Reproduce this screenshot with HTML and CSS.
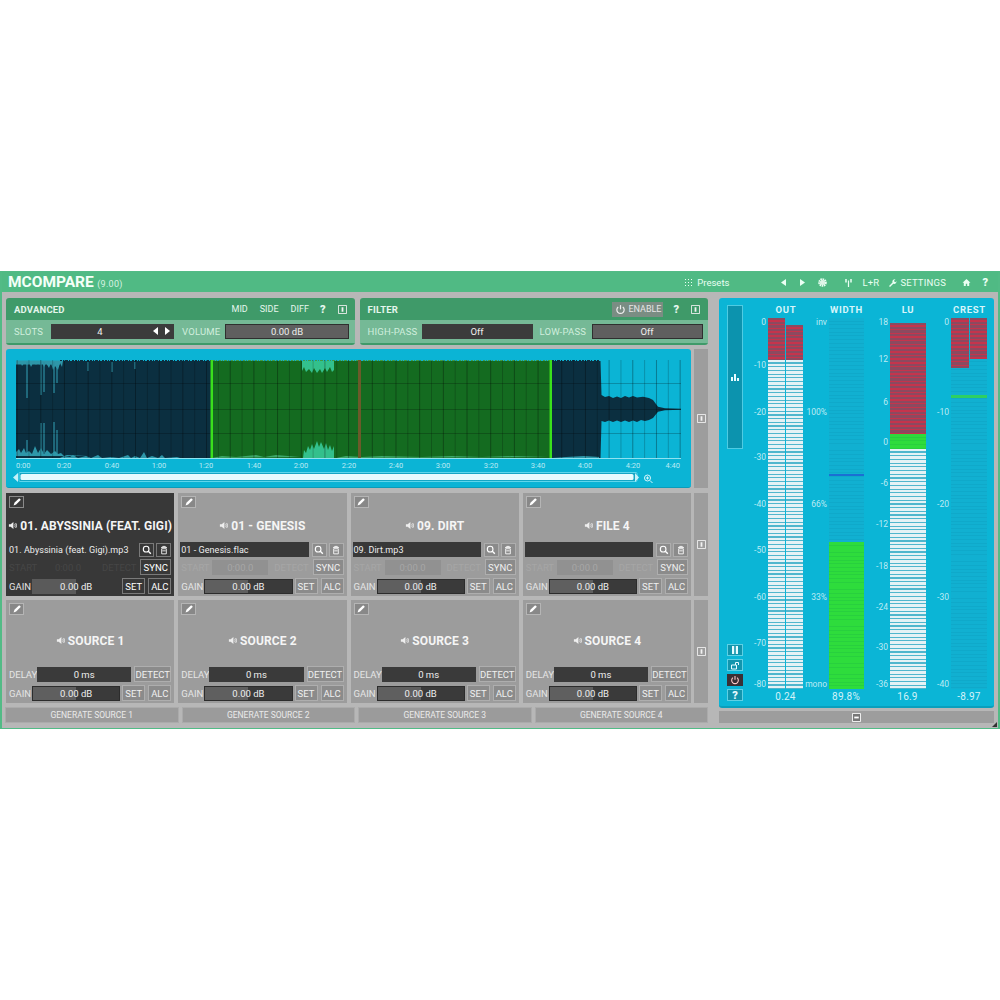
FILE: index.html
```html
<!DOCTYPE html>
<html lang="en">
<head>
<meta charset="utf-8">
<title>MCompare</title>
<link rel="stylesheet" href="styles.css">
</head>
<body>
<svg class="defs" width="0" height="0" aria-hidden="true">
  <symbol id="i-pencil" viewBox="0 0 14 14"><path d="M3 11l1-3 5.5-5.5 2 2L6 10z" fill="#fff"/></symbol>
  <symbol id="i-speaker" viewBox="0 0 10 10"><path d="M1 3.5h2L6 1v8L3 6.5H1z" fill="currentColor"/><path d="M7.2 3.2c1 1 1 2.600 0 3.600M8.400 2.200c1.500 1.600 1.500 4 0 5.600" fill="none" stroke="currentColor"/></symbol>
  <symbol id="i-search" viewBox="0 0 14 14"><circle cx="6" cy="6" r="3.300" fill="none" stroke="#fff" stroke-width="1.300"/><path d="M8.500 8.500l3 3" stroke="#fff" stroke-width="1.600"/></symbol>
  <symbol id="i-trash" viewBox="0 0 14 14"><path d="M3.500 4h7M5.500 4V2.800h3V4" fill="none" stroke="#fff"/><path d="M4.300 5.500h5.400V11.500H4.300z" fill="none" stroke="#fff"/><path d="M5 8h4" stroke="#fff"/></symbol>
  <symbol id="i-tab" viewBox="0 0 10 10"><path d="M.5.500h9v9h-9z" fill="none" stroke="#f2f2f2"/><path d="M4 2.500h2v5H4z" fill="#f2f2f2"/></symbol>
  <symbol id="i-tabh" viewBox="0 0 10 10"><path d="M.5.500h9v9h-9z" fill="#777" stroke="#fff"/><path d="M2.500 5h5" stroke="#fff" stroke-width="2"/></symbol>
  <symbol id="i-power" viewBox="0 0 12 12"><path d="M3.500 3.200a4 4 0 1 0 5 0" fill="none" stroke="currentColor" stroke-width="1.300"/><path d="M6 1.200v4.600" stroke="currentColor" stroke-width="1.300"/></symbol>
</svg>

<div class="plugin">
  <header class="titlebar">
    <div class="brand"><span class="brand-name">MCOMPARE</span> <span class="brand-ver">(9.00)</span></div>
    <div class="bar-tools">
      <span class="tool presets"><svg class="ic9" viewBox="0 0 9 9"><path d="M1 1h1v1H1zM4 1h1v1H4zM7 1h1v1H7zM1 4h1v1H1zM4 4h1v1H4zM7 4h1v1H7zM1 7h1v1H1zM4 7h1v1H4zM7 7h1v1H7z" fill="#eafff3"/></svg>Presets</span>
      <span class="tool prev"><svg class="ic9" viewBox="0 0 9 9"><path d="M7 1v7L2 4.500z" fill="#eafff3"/></svg></span>
      <span class="tool next"><svg class="ic9" viewBox="0 0 9 9"><path d="M2 1v7l5-3.500z" fill="#eafff3"/></svg></span>
      <span class="tool gear"><svg class="ic9" viewBox="0 0 9 9"><circle cx="4.500" cy="4.500" r="3.200" fill="none" stroke="#eafff3" stroke-width="2.200" stroke-dasharray="1.500 .6"/><circle cx="4.500" cy="4.500" r="2.500" fill="#dff5e8"/></svg></span>
      <span class="tool antenna"><svg class="ic9" viewBox="0 0 9 9"><path d="M4.500 2.500V9" stroke="#eafff3" stroke-width="1.200"/><path d="M2 1v3.500M7 1v3.500" stroke="#eafff3" stroke-width="1.500"/></svg></span>
      <span class="tool lr">L+R</span>
      <span class="tool settings"><svg class="ic9" viewBox="0 0 9 9"><path d="M1 8l3.500-3.500c-.6-1.500.6-3.500 3-3.200L6 2.800l.5 1 1 .4L8.500 3c.2 2.300-1.700 3.400-3.200 2.800L2 9z" fill="#eafff3"/></svg>SETTINGS</span>
      <span class="tool home"><svg class="ic9" viewBox="0 0 9 9"><path d="M4.500 1L.5 4.800h1.300V8h2V5.800h1.400V8h2V4.800h1.300z" fill="#eafff3"/></svg></span>
      <span class="tool help">?</span>
    </div>
  </header>

  <main class="workspace">
    <div class="left">
      <div class="panels">
        <section class="panel">
          <div class="panel-head">
            <span class="panel-title">ADVANCED</span>
            <span class="ph-btn mid">MID</span><span class="ph-btn">SIDE</span><span class="ph-btn">DIFF</span>
            <span class="ph-q">?</span><svg class="tabic"><use href="#i-tab"/></svg>
          </div>
          <div class="panel-row">
            <span class="plabel l-slots">SLOTS</span>
            <div class="field f-slots"><span class="f-center">4</span><span class="arrows">
              <svg class="arr" viewBox="0 0 7 8"><path d="M6 0v8L1 4z" fill="#fff"/></svg>
              <svg class="arr" viewBox="0 0 7 8"><path d="M1 0v8l5-4z" fill="#fff"/></svg></span></div>
            <span class="plabel l-volume">VOLUME</span>
            <div class="field lit f-volume">0.00 dB</div>
          </div>
        </section>
        <section class="panel">
          <div class="panel-head">
            <span class="panel-title">FILTER</span>
            <span class="enable"><svg class="pw"><use href="#i-power"/></svg>ENABLE</span>
            <span class="ph-q">?</span><svg class="tabic"><use href="#i-tab"/></svg>
          </div>
          <div class="panel-row">
            <span class="plabel l-hp">HIGH-PASS</span>
            <div class="field f-pass">Off</div>
            <span class="plabel l-lp">LOW-PASS</span>
            <div class="field lit f-pass">Off</div>
          </div>
        </section>
      </div>

      <div class="lane wave-lane">
        <section class="wave">
          <svg class="wave-svg" viewBox="6 349 685 139" preserveAspectRatio="none">
            <defs>
              <pattern id="gridV" x="16.6" y="0" width="23.68" height="200" patternUnits="userSpaceOnUse">
                <rect x="0" y="0" width="1" height="200" fill="#000" fill-opacity=".32"/>
                <rect x="11.840" y="0" width="1" height="200" fill="#000" fill-opacity=".2"/>
              </pattern>
            </defs>
            <!-- dark body -->
            <path class="w-dark" d="M16 361H600V458H16z"/>
            <path class="w-green" d="M212 361H550V458H212z"/>
            <!-- fringes -->
            <line class="fr-dark" x1="60" y1="360.500" x2="212" y2="360.500"/>
            <line class="fr-dark" x1="552" y1="360.500" x2="600" y2="360.500"/>
            <line class="fr-green" x1="212" y1="360.500" x2="550" y2="360.500"/>
            <line class="fr-top" x1="16" y1="362.500" x2="60" y2="362.500"/>
            <path class="w-teal" d="M16 361l2 3 2-3 2 5 3-4 2 3 2-3 2 5 3-6 2 4 2-4 2 4 2-3 2 5 2-4 3 5 2-5 2 7 2-4 3 4 2-7 2 4 1-6z"/>
            <path class="spike" d="M27 362v36M41 362v33M44 362v30M54 362v31M57 365v18M88 362v9M112 362v10M135 362v7M41 423v33M44 423v30M54 422v34M57 430v26M27 440v16"/>
            <path class="w-teal" d="M16 458v-6l3-3 2 4 3-5 2 5 3-2 3 3 3-8 3 7 3-5 3 6 3-4 4 4 4-3 3 3 3-1 3 3 3-1 20 1H16zM60 458l4-2 6 1 3-2 5 3 8-2 5 2 7-3 4 3 9-1 8 1 9-3 3 3 4-2 5 2 4-6 3 6 5-2 6 2 4-3 3 3 12-1 3 1z"/>
            <path class="w-aqua" d="M302 361h32v9l-2 2-2-5-3 5-2-4-3 5-2-4-3 4-3-5-2 5-3-4-3 3-2-5-2 4z"/>
            <path class="w-aqua" d="M303 458l1-8 2 3 2-7 2 4 2-6 2 5 3-8 2 6 2-5 3 7 2-6 2 7 2-5 2 6 2-5v12z"/>
            <path class="w-greenlight" d="M212 458l10-2 14 1 20-2 8 2 12-2 24 2zM336 458l10-2 16 1 20-1 40 1 30-1 30 1 30-1 36 1z"/>
            <path class="w-teal" d="M552 458l14-1 18-1 16 1v1z"/>
            <!-- tail -->
            <path class="w-dark" d="M599 361H600.500L601.500 395 605 397 609 396 613 398 617 396.500 621 398 625 396 629 397.500 633 396 637 397.500 643 396.700 649 398 653 400 658 406.700 665 408.300 681 408.800V409.800L665 410.300 658 411.700 653 418 649 420 645 421 641 420 637 422 633 420.500 629 422 625 420.500 621 422 617 420.500 613 422 609 420.500 605 422 601.500 421 600.500 458H599z"/>
            <!-- grid -->
            <rect x="16.500" y="360" width="664.500" height="98" fill="url(#gridV)"/>
            <path class="w-hgrid" d="M16 383.500H681M16 409.500H681M16 433.500H681"/>
            <!-- selection markers -->
            <rect class="w-brown" x="358" y="360" width="3" height="98"/>
            <rect class="w-marker" x="210.500" y="360" width="2.500" height="98"/>
            <rect class="w-marker" x="549.500" y="360" width="2.500" height="98"/>
            <line class="w-axis" x1="16" y1="458.500" x2="681" y2="458.500"/>
            <!-- time scale -->
            <g class="w-time">
              <text x="16" y="468" class="start">0:00</text><text x="64" y="468">0:20</text><text x="112" y="468">0:40</text><text x="159" y="468">1:00</text><text x="206" y="468">1:20</text><text x="254" y="468">1:40</text><text x="301" y="468">2:00</text><text x="349" y="468">2:20</text><text x="396" y="468">2:40</text><text x="443" y="468">3:00</text><text x="491" y="468">3:20</text><text x="538" y="468">3:40</text><text x="585" y="468">4:00</text><text x="633" y="468">4:20</text><text x="680" y="468" class="end">4:40</text>
            </g>
            <!-- scrollbar -->
            <rect class="sc-track" x="19" y="472.500" width="618" height="9" rx="1"/>
            <rect class="sc-thumb" x="20.500" y="474" width="613" height="6" rx="1.500"/>
            <path class="sc-arrow" d="M18 473v9l-5-4.500zM635 473v9l4-4.500z"/>
            <circle class="sc-zoom" cx="647.500" cy="478" r="3"/>
            <path class="sc-zoom" d="M650 480.500l2.500 2.500M646 478h3M647.500 476.500v3"/>
          </svg>
        </section>
        <aside class="strip"><svg class="tabic"><use href="#i-tab"/></svg></aside>
      </div>

      <div class="lane">
        <div class="cards">
          <article class="card active">
            <span class="edit"><svg><use href="#i-pencil"/></svg></span>
            <h2 class="card-title"><svg class="spk"><use href="#i-speaker"/></svg>01. ABYSSINIA (FEAT. GIGI)</h2>
            <div class="row file"><div class="fname">01. Abyssinia (feat. Gigi).mp3</div><span class="btn sq"><svg><use href="#i-search"/></svg></span><span class="btn sq"><svg><use href="#i-trash"/></svg></span></div>
            <div class="row sync"><span class="faded lab">START</span><span class="faded box">0:00.0</span><span class="faded det">DETECT</span><span class="btn b-sync">SYNC</span></div>
            <div class="row"><span class="lab">GAIN</span><div class="slider bare">0.00 dB</div><span class="btn b-set">SET</span><span class="btn b-alc">ALC</span></div>
          </article>
          <article class="card">
            <span class="edit"><svg><use href="#i-pencil"/></svg></span>
            <h2 class="card-title"><svg class="spk"><use href="#i-speaker"/></svg>01 - GENESIS</h2>
            <div class="row file"><div class="fname">01 - Genesis.flac</div><span class="btn sq"><svg><use href="#i-search"/></svg></span><span class="btn sq"><svg><use href="#i-trash"/></svg></span></div>
            <div class="row sync"><span class="faded lab">START</span><span class="faded box">0:00.0</span><span class="faded det">DETECT</span><span class="btn b-sync">SYNC</span></div>
            <div class="row"><span class="lab">GAIN</span><div class="slider">0.00 dB</div><span class="btn b-set">SET</span><span class="btn b-alc">ALC</span></div>
          </article>
          <article class="card">
            <span class="edit"><svg><use href="#i-pencil"/></svg></span>
            <h2 class="card-title"><svg class="spk"><use href="#i-speaker"/></svg>09. DIRT</h2>
            <div class="row file"><div class="fname">09. Dirt.mp3</div><span class="btn sq"><svg><use href="#i-search"/></svg></span><span class="btn sq"><svg><use href="#i-trash"/></svg></span></div>
            <div class="row sync"><span class="faded lab">START</span><span class="faded box">0:00.0</span><span class="faded det">DETECT</span><span class="btn b-sync">SYNC</span></div>
            <div class="row"><span class="lab">GAIN</span><div class="slider">0.00 dB</div><span class="btn b-set">SET</span><span class="btn b-alc">ALC</span></div>
          </article>
          <article class="card">
            <span class="edit"><svg><use href="#i-pencil"/></svg></span>
            <h2 class="card-title"><svg class="spk"><use href="#i-speaker"/></svg>FILE 4</h2>
            <div class="row file"><div class="fname"></div><span class="btn sq"><svg><use href="#i-search"/></svg></span><span class="btn sq"><svg><use href="#i-trash"/></svg></span></div>
            <div class="row sync"><span class="faded lab">START</span><span class="faded box">0:00.0</span><span class="faded det">DETECT</span><span class="btn b-sync">SYNC</span></div>
            <div class="row"><span class="lab">GAIN</span><div class="slider">0.00 dB</div><span class="btn b-set">SET</span><span class="btn b-alc">ALC</span></div>
          </article>
        </div>
        <aside class="strip"><svg class="tabic"><use href="#i-tab"/></svg></aside>
      </div>

      <div class="lane">
        <div class="cards">
          <article class="card source">
            <span class="edit"><svg><use href="#i-pencil"/></svg></span>
            <h2 class="card-title"><svg class="spk"><use href="#i-speaker"/></svg>SOURCE 1</h2>
            <div class="row delay"><span class="lab">DELAY</span><div class="dfield">0 ms</div><span class="btn b-det">DETECT</span></div>
            <div class="row"><span class="lab">GAIN</span><div class="slider">0.00 dB</div><span class="btn b-set">SET</span><span class="btn b-alc">ALC</span></div>
          </article>
          <article class="card source">
            <span class="edit"><svg><use href="#i-pencil"/></svg></span>
            <h2 class="card-title"><svg class="spk"><use href="#i-speaker"/></svg>SOURCE 2</h2>
            <div class="row delay"><span class="lab">DELAY</span><div class="dfield">0 ms</div><span class="btn b-det">DETECT</span></div>
            <div class="row"><span class="lab">GAIN</span><div class="slider">0.00 dB</div><span class="btn b-set">SET</span><span class="btn b-alc">ALC</span></div>
          </article>
          <article class="card source">
            <span class="edit"><svg><use href="#i-pencil"/></svg></span>
            <h2 class="card-title"><svg class="spk"><use href="#i-speaker"/></svg>SOURCE 3</h2>
            <div class="row delay"><span class="lab">DELAY</span><div class="dfield">0 ms</div><span class="btn b-det">DETECT</span></div>
            <div class="row"><span class="lab">GAIN</span><div class="slider">0.00 dB</div><span class="btn b-set">SET</span><span class="btn b-alc">ALC</span></div>
          </article>
          <article class="card source">
            <span class="edit"><svg><use href="#i-pencil"/></svg></span>
            <h2 class="card-title"><svg class="spk"><use href="#i-speaker"/></svg>SOURCE 4</h2>
            <div class="row delay"><span class="lab">DELAY</span><div class="dfield">0 ms</div><span class="btn b-det">DETECT</span></div>
            <div class="row"><span class="lab">GAIN</span><div class="slider">0.00 dB</div><span class="btn b-set">SET</span><span class="btn b-alc">ALC</span></div>
          </article>
        </div>
        <aside class="strip"><svg class="tabic"><use href="#i-tab"/></svg></aside>
      </div>

      <div class="generate">
        <span class="gen">GENERATE SOURCE 1</span>
        <span class="gen">GENERATE SOURCE 2</span>
        <span class="gen">GENERATE SOURCE 3</span>
        <span class="gen">GENERATE SOURCE 4</span>
      </div>
    </div>

    <div class="right">
      <section class="meters">
        <div class="tools">
          <div class="mode"><svg class="bars-ic" viewBox="0 0 10 10"><path d="M1 5h2v4H1zM4 2h2v7H4zM7 6h2v3H7z" fill="#e8fbff"/></svg></div>
          <div class="tool-btns">
            <span class="tb"><svg viewBox="0 0 10 10"><path d="M2 1h2.200v8H2zM5.800 1H8v8H5.800z" fill="#e8fbff"/></svg></span>
            <span class="tb"><svg viewBox="0 0 10 10"><path d="M1.500 5h5v4h-5z" fill="none" stroke="#e8fbff"/><path d="M5.500 5V2.500h3V5" fill="none" stroke="#e8fbff"/></svg></span>
            <span class="tb on"><svg class="pw-on"><use href="#i-power"/></svg></span>
            <span class="tb q">?</span>
          </div>
        </div>

        <div class="meter m-out">
          <div class="m-title">OUT</div>
          <div class="m-body">
            <div class="scale">
              <span style="top:3px">0</span><span style="top:46px">-10</span><span style="top:93px">-20</span><span style="top:138px">-30</span><span style="top:185px">-40</span><span style="top:231px">-50</span><span style="top:278px">-60</span><span style="top:324px">-70</span><span style="top:365px">-80</span>
            </div>
            <div class="bar dual">
              <div class="chan"><div class="seg red" style="height:42px"></div><div class="seg white"></div></div>
              <div class="chan"><div class="seg gap" style="height:7px"></div><div class="seg red" style="height:35px"></div><div class="seg white"></div></div>
            </div>
          </div>
          <div class="m-value">0.24</div>
        </div>

        <div class="meter m-width">
          <div class="m-title">WIDTH</div>
          <div class="m-body">
            <div class="scale">
              <span style="top:3px">inv</span><span style="top:93px">100%</span><span style="top:185px">66%</span><span style="top:278px">33%</span><span style="top:365px">mono</span>
            </div>
            <div class="bar single">
              <div class="seg gap" style="height:224px"></div><div class="seg green"></div>
              <div class="level blue" style="top:156px"></div>
            </div>
          </div>
          <div class="m-value">89.8%</div>
        </div>

        <div class="meter m-lu">
          <div class="m-title">LU</div>
          <div class="m-body">
            <div class="scale">
              <span style="top:3px">18</span><span style="top:40px">12</span><span style="top:83px">6</span><span style="top:123px">0</span><span style="top:164px">-6</span><span style="top:205px">-12</span><span style="top:247px">-18</span><span style="top:288px">-24</span><span style="top:328px">-30</span><span style="top:365px">-36</span>
            </div>
            <div class="bar flat">
              <div class="seg gap" style="height:5px"></div><div class="seg red" style="height:111px"></div><div class="seg green" style="height:15px"></div><div class="seg white"></div>
            </div>
          </div>
          <div class="m-value">16.9</div>
        </div>

        <div class="meter m-crest">
          <div class="m-title">CREST</div>
          <div class="m-body">
            <div class="scale">
              <span style="top:3px">0</span><span style="top:93px">-10</span><span style="top:185px">-20</span><span style="top:278px">-30</span><span style="top:365px">-40</span>
            </div>
            <div class="bar dual tinted">
              <div class="chan"><div class="seg red" style="height:50px"></div></div>
              <div class="chan"><div class="seg red" style="height:41px"></div></div>
              <div class="level lime" style="top:77px"></div>
            </div>
          </div>
          <div class="m-value">-8.97</div>
        </div>
      </section>
      <div class="bottom-strip"><svg class="tabic"><use href="#i-tabh"/></svg></div>
    </div>
  </main>
  <svg class="grip" viewBox="0 0 5 5"><path d="M5 0v5H0z" fill="#333"/></svg>
</div>
</body>
</html>
```

FILE: styles.css
```css
* { box-sizing: border-box; }
html, body { margin: 0; padding: 0; background: #fff; }
body { font-family: Roboto, "Liberation Sans", sans-serif; color: #f2f2f2; font-size: 9.5px; }
.defs { position: absolute; }

.plugin {
  position: relative;
  margin-top: 271px;
  height: 458px;
  background: #b7b7b7;
  border: solid #52bb86;
  border-width: 1px 2px 1px 2px;
  overflow: hidden;
}

/* title bar */
.titlebar {
  height: 20px;
  background: #50ba84;
  display: flex;
  align-items: center;
  justify-content: space-between;
  color: #eafff3;
}
.brand { padding-left: 6px; white-space: nowrap; }
.brand-name { font-size: 15.500px; font-weight: 700; color: #f4fff8; }
.brand-ver { font-size: 9px; margin-left: 1px; color: #d8f2e3; letter-spacing: .3px; }
.bar-tools { display: flex; align-items: center; font-size: 9.5px; height: 100%; padding-right: 8px; }
.tool { display: flex; align-items: center; letter-spacing: .2px; }
.ic9 { width: 9px; height: 9px; display: block; }
.presets { gap: 4px; letter-spacing: 0; }
.prev { margin-left: 50px; }
.next { margin-left: 10px; }
.gear { margin-left: 11px; }
.antenna { margin-left: 17px; }
.lr { margin-left: 9px; }
.settings { margin-left: 9px; gap: 3px; }
.home { margin-left: 16px; }
.help { margin-left: 10px; font-size: 11px; font-weight: 900; width: 9px; justify-content: center; }

/* layout */
.workspace { display: flex; gap: 11px; padding: 6px 0 0 4px; }
.left { width: 702px; display: flex; flex-direction: column; gap: 4px; }
.right { width: 275px; display: flex; flex-direction: column; gap: 3px; }
.panels { display: flex; gap: 5px; height: 47px; }
.lane { display: flex; gap: 3px; }
.wave-lane { margin-bottom: 1px; }
.strip {
  width: 14px;
  background: #9d9d9d;
  display: flex;
  align-items: center;
  justify-content: center;
}
.tabic { width: 9px; height: 9px; display: block; flex: none; }

/* top panels */
.panel {
  flex: 1;
  background: #3f9a69;
  border-radius: 3px;
  padding-bottom: 2px;
  display: flex;
  flex-direction: column;
}
.panel-head {
  height: 22px;
  display: flex;
  align-items: center;
  padding: 0 8px;
  color: #e6f7ee;
}
.panel-title { font-weight: 700; font-size: 9.500px; letter-spacing: .2px; color: #e4f6ec; margin-right: auto; }
.ph-btn { font-size: 9px; margin-left: 12px; }
.ph-q { font-weight: 900; font-size: 11px; margin-left: 11px; margin-right: 12px; }
.enable {
  display: flex;
  align-items: center;
  gap: 2px;
  background: #7a8d83;
  width: 51px;
  height: 15px;
  padding: 0 0 0 3px;
  font-size: 9px;
  color: #e6e6e6;
  margin-right: -1px;
}
.pw { width: 11px; height: 11px; color: #eee; }
.panel-row {
  flex: 1;
  background: #75b996;
  display: flex;
  align-items: center;
  padding: 0 5px 0 8px;
  color: #c9ecd9;
  font-size: 9.500px;
}
.plabel { letter-spacing: .2px; white-space: nowrap; color: #d0eedd; }
.l-slots { width: 37px; }
.l-volume { width: 43px; margin-left: 8px; }
.l-hp { width: 54px; }
.l-lp { width: 52px; margin-left: 7px; }
.field {
  height: 15px;
  background: #3b3b3b;
  display: flex;
  align-items: center;
  justify-content: center;
  position: relative;
  color: #eee;
  font-size: 9.500px;
}
.field.lit { background: #5f5f5f; border: 1px solid #2f2f2f; }
.f-slots { width: 123px; padding-right: 25px; }
.f-volume { width: 124px; }
.f-pass { width: 111px; }
.arrows { position: absolute; right: 3px; top: 3px; display: flex; gap: 5px; }
.arr { width: 7px; height: 8px; display: block; }

/* waveform */
.wave {
  flex: 1;
  height: 139px;
  background: #0bb4d5;
  border-radius: 3px;
  border-bottom: 1px solid #0a9cb9;
  overflow: hidden;
}
.wave-svg { display: block; width: 100%; height: 139px; }
.w-dark { fill: #0b2f40; }
.w-green { fill: #146b20; }
.w-teal { fill: #2e97a9; }
.w-aqua { fill: #33c08c; }
.w-greenlight { fill: #3ea86a; }
.spike { stroke: #2e8fa3; stroke-width: 1.200; fill: none; }
.fr-dark { stroke: #0b2f40; stroke-width: 1; stroke-dasharray: 2 1 1 1 3 1 1 2 2 1; }
.fr-green { stroke: #3f9c44; stroke-width: 1; stroke-dasharray: 3 1 1 2 2 1 1 1; }
.fr-top { stroke: #2e97a9; stroke-width: 4; }
.w-hgrid { stroke: #000; stroke-opacity: .22; stroke-width: 1; fill: none; }
.w-brown { fill: #6b5a2a; }
.w-marker { fill: #3ae01c; }
.w-axis { stroke: #8fe2f0; stroke-width: 1; }
.w-time text { font-family: Roboto, sans-serif; font-size: 7.500px; fill: #bdebf4; text-anchor: middle; }
.w-time .start { text-anchor: start; }
.w-time .end { text-anchor: end; }
.sc-track { fill: #14a6c5; stroke: #5fd7ec; stroke-width: 1; }
.sc-thumb { fill: #e6fbfe; }
.sc-arrow { fill: #c4f1f9; }
circle.sc-zoom, path.sc-zoom { fill: none; stroke: #d9f7fc; stroke-width: 1; }

/* cards */
.cards { flex: 1; display: grid; grid-template-columns: repeat(4, 1fr); gap: 4px; }
.card {
  position: relative;
  height: 103px;
  background: #9c9c9c;
  padding: 0 3px 2px;
  display: flex;
  flex-direction: column;
  justify-content: flex-end;
  gap: 3px;
}
.card.active { background: #383838; }
.edit {
  position: absolute;
  left: 3px;
  top: 3px;
  width: 15px;
  height: 12px;
  background: #888;
  border: 1px solid #b5b5b5;
  display: flex;
  align-items: center;
  justify-content: center;
}
.active .edit { background: #3a3a3a; border-color: #8a8a8a; }
.edit svg { width: 12px; height: 12px; }
.card-title {
  position: absolute;
  left: 0;
  right: 0;
  top: 25px;
  margin: 0;
  height: 15px;
  display: flex;
  align-items: center;
  justify-content: center;
  gap: 3px;
  font-size: 12px;
  font-weight: 700;
  letter-spacing: .1px;
  color: #f5f5f5;
  white-space: nowrap;
}
.source .card-title { top: 33px; }
.spk { width: 9px; height: 9px; color: #eee; flex: none; }
.row { display: flex; align-items: center; height: 16px; gap: 3px; font-size: 9.500px; }
.row.file { height: 15px; gap: 2px; margin-bottom: -1px; }
.lab { color: #e5e5e5; white-space: nowrap; width: 20px; flex: none; }
.fname {
  flex: 1;
  height: 15px;
  background: #383838;
  display: flex;
  align-items: center;
  padding-left: 1px;
  margin: 0 1px 0 -1px;
  font-size: 9px;
  letter-spacing: .05px;
  color: #eee;
  white-space: nowrap;
  min-width: 0;
}
.active .fname { padding-left: 0; margin-left: 0; }
.btn {
  background: #8b8b8b;
  border: 1px solid #aeaeae;
  color: #f0f0f0;
  display: flex;
  align-items: center;
  justify-content: center;
  height: 16px;
  white-space: nowrap;
  font-size: 9.500px;
  flex: none;
}
.active .btn { background: #383838; border-color: #7a7a7a; color: #fff; }
.sq { width: 15px; height: 14px; }
.sq svg { width: 12px; height: 12px; }
.b-sync { width: 31px; margin-left: auto; }
.b-set { width: 23px; }
.b-alc { width: 23px; }
.b-det { width: 37px; }
.faded { color: #a6a6a6; }
.active .faded { color: #464646; }
.box {
  width: 56px;
  height: 15px;
  background: #919191;
  display: flex;
  align-items: center;
  justify-content: center;
  margin-left: 8px;
}
.active .box { background: #383838; }
.det { margin-left: 3px; }
.slider {
  flex: 1;
  min-width: 0;
  height: 15px;
  margin-right: -1px;
  background: linear-gradient(90deg, #5f5f5f 50%, #3a3a3a 50%);
  border: 1px solid #2c2c2c;
  display: flex;
  align-items: center;
  justify-content: center;
  color: #eee;
}
.slider.bare { background: linear-gradient(90deg, #5a5a5a 50%, #383838 50%); border: 0; }
.dfield {
  flex: 1;
  min-width: 0;
  height: 15px;
  background: #3a3a3a;
  display: flex;
  align-items: center;
  justify-content: center;
  color: #eee;
  margin-left: 5px;
}

/* generate */
.generate { display: grid; grid-template-columns: repeat(4, 1fr); gap: 3px; margin-left: -1px; height: 16px; }
.gen {
  background: #9b9b9b;
  border: 1px solid #ababab;
  display: flex;
  align-items: center;
  justify-content: center;
  font-size: 8.500px;
  color: #eaeaea;
}

/* meters */
.meters {
  height: 410px;
  background: #0bb5d6;
  border-radius: 3px;
  border-bottom: 2px solid #0a9fbc;
  display: flex;
  padding-left: 8px;
}
.tools {
  width: 16px;
  flex: none;
  display: flex;
  flex-direction: column;
  justify-content: space-between;
  padding: 7px 0 5px;
}
.mode {
  height: 144px;
  background: #0c93ae;
  border: 1px solid #4fcbe2;
  display: flex;
  align-items: center;
  justify-content: center;
}
.bars-ic { width: 10px; height: 10px; }
.tool-btns { display: flex; flex-direction: column; gap: 3px; }
.tb {
  height: 12px;
  background: #1295ad;
  border: 1px solid #5fd0e4;
  display: flex;
  align-items: center;
  justify-content: center;
  color: #e8fbff;
}
.tb svg { width: 10px; height: 10px; display: block; }
.tb.on { background: #3a2f33; border-color: #3a2f33; color: #ffc9c9; }
.tb.q { font-weight: 900; font-size: 11px; }
.meter { display: flex; flex-direction: column; flex: none; }
.m-out { width: 60px; }
.m-width { width: 61px; }
.m-lu { width: 62px; }
.m-crest { width: 61px; }
.m-title {
  height: 20px;
  padding-top: 7px;
  padding-left: 26px;
  text-align: center;
  font-size: 9.500px;
  font-weight: 700;
  letter-spacing: .7px;
  color: #d6f5fb;
  line-height: 10px;
  white-space: nowrap;
}
.m-body { height: 371px; display: flex; gap: 2px; }
.scale { position: relative; width: 23px; flex: none; margin-top: -4px; }
.m-width .scale, .m-lu .scale { width: 24px; }
.scale span {
  position: absolute;
  right: 0;
  height: 10px;
  line-height: 10px;
  font-size: 8.500px;
  color: #bcebf4;
  white-space: nowrap;
}
.bar { position: relative; flex: none; height: 371px; display: flex; width: 35px; }
.m-lu .bar { width: 36px; }
.m-crest .bar { width: 36px; }
.bar.single, .bar.flat { flex-direction: column; }
.bar.single, .bar.tinted {
  background: repeating-linear-gradient(180deg, #11b0d1 0, #11b0d1 2.700px, #0fa9ca 2.700px, #0fa9ca 3.700px);
}
.bar.dual { gap: 1px; }
.chan { flex: 1; display: flex; flex-direction: column; }
.seg.gap { flex: none; }
.seg.red { flex: none; background: repeating-linear-gradient(180deg, #8b4a60 0, #8b4a60 2.200px, #c5344c 2.200px, #c5344c 3.700px); }
.seg.white { flex: 1; background: repeating-linear-gradient(180deg, #e4f2f5 0, #e4f2f5 2.500px, #4fb6cd 2.500px, #4fb6cd 3.700px); }
.seg.green { flex: 1; background: repeating-linear-gradient(180deg, #2edc3c 0, #2edc3c 2.800px, #28d03e 2.800px, #28d03e 3.700px); }
.m-lu .seg.green { flex: none; }
.level { position: absolute; left: 0; right: 0; height: 2px; }
.level.blue { background: #1a6fd4; }
.level.lime { background: #2ecf62; height: 3px; }
.m-value {
  padding-left: 25px;
  padding-top: 2px;
  text-align: center;
  font-size: 10px;
  color: #d3f3f9;
  letter-spacing: .2px;
  white-space: nowrap;
}
.bottom-strip {
  height: 12px;
  background: #9d9d9d;
  display: flex;
  align-items: center;
  justify-content: center;
}
.grip { position: absolute; right: 1px; bottom: 1px; width: 5px; height: 5px; }
```
